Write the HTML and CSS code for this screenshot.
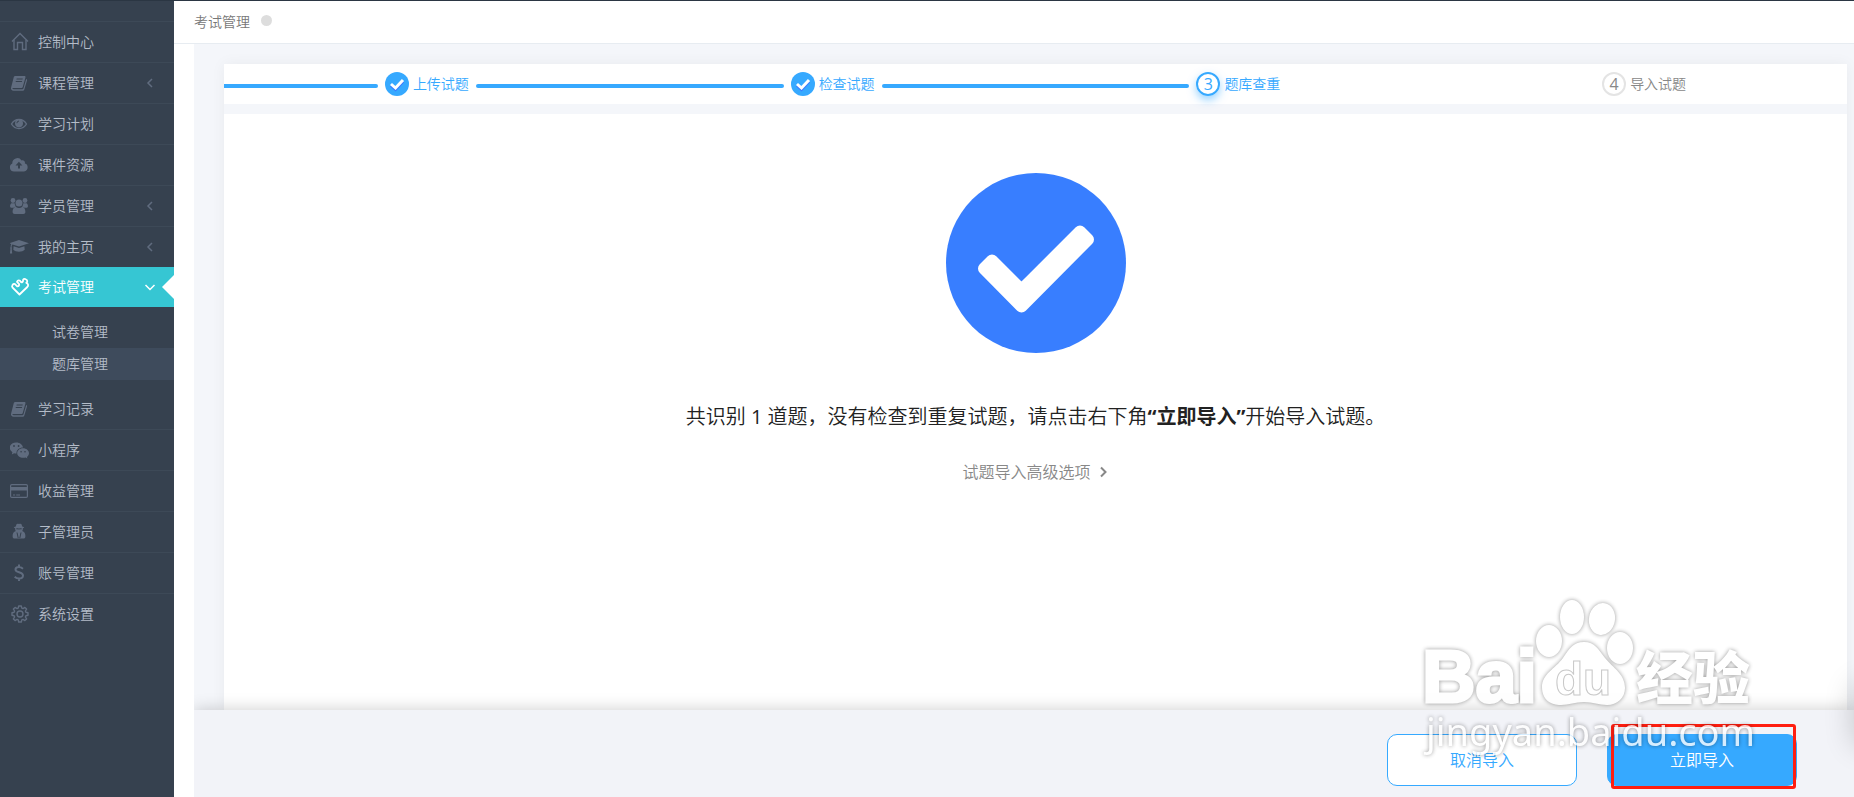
FILE: index.html
```html
<!DOCTYPE html>
<html lang="zh-CN">
<head>
<meta charset="utf-8">
<title>考试管理</title>
<link rel="stylesheet" href="styles.css">
</head>
<body>
<div class="app">
  <nav class="sidebar">
    <ul class="menu">
      <li><a class="item" href="#"><svg class="icon" viewBox="0 0 20 20"><g fill="none" stroke="currentColor" stroke-width="1.4"><path d="M2 9.500 10 1.500 18 9.500"/><path d="M4 8v9.500h3.500v-7h5v7h3.500V8"/></g></svg><span>控制中心</span></a></li>
      <li><a class="item" href="#"><svg class="icon" viewBox="1 0 20 20"><path fill="currentColor" fill-rule="evenodd" d="M6.200 3h9.300c.8 0 1.200.6 1 1.300l-2.700 9.400c-.3 1-.8 1.300-1.600 1.300H4.100c-.7 0-.8.3-.7.6.2.5.8.6 1.400.6h8.500c.6 0 1-.3 1.200-.9L17.200 6c.7.300 1 .8.800 1.500l-2.600 8.700c-.3.900-1 1.600-2 1.600H4.600c-1.800 0-3.100-1.500-2.500-3.200L4.800 4c.2-.6.700-1 1.400-1zm1.500 2.600-.3 1h6.100l.3-1zm-.8 2.500-.3 1h6.200l.3-1z"/></svg><span>课程管理</span><svg class="arrow" viewBox="0 0 12 12"><path d="M8 2 4 6l4 4"/></svg></a></li>
      <li><a class="item" href="#"><svg class="icon" viewBox="1 0 20 20"><g fill="none" stroke="currentColor"><path stroke-width="1.4" d="M2.500 10C6 4 14 4 17.500 10 14 16 6 16 2.500 10z"/></g><circle cx="10" cy="9.300" r="4" fill="currentColor"/><path d="M7.900 9.200A2.200 2.200 0 0 1 10 7" stroke="#36414f" fill="none"/></svg><span>学习计划</span></a></li>
      <li><a class="item" href="#"><svg class="icon" viewBox="1 0 20 20"><path fill="currentColor" fill-rule="evenodd" d="M5 16.500a4.200 4.200 0 0 1-1.700-8A5 5 0 0 1 12.500 5.500c2-.8 3.900.8 3.400 2.900 4 .8 3.600 7.700-.9 8.100zM9.900 6.800 6.500 10.400H9v3.200h2v-3.200h2.400z"/></svg><span>课件资源</span></a></li>
      <li><a class="item" href="#"><svg class="icon" viewBox="1 0 20 20"><g fill="currentColor"><circle cx="4" cy="4.500" r="2.400"/><circle cx="16" cy="4.500" r="2.400"/><circle cx="10" cy="7" r="3.500"/><path d="M2.400 7.200h3.300c.1 1.800.8 2.900 1.600 3.500-1.300 0-2 .3-2.700 1H2.700C.3 11.700.8 8.200 2.400 7.200zM17.600 7.200h-3.300c-.1 1.800-.8 2.900-1.600 3.500 1.300 0 2 .3 2.700 1h1.900c2.400 0 1.900-3.500.3-4.500zM7 11c1.500 1.200 4.500 1.200 6 0 2.700 0 3.400 2.800 3.400 5 0 1.300-.8 2-2 2H5.600c-1.200 0-2-.7-2-2 0-2.200.7-5 3.400-5z"/></g></svg><span>学员管理</span><svg class="arrow" viewBox="0 0 12 12"><path d="M8 2 4 6l4 4"/></svg></a></li>
      <li><a class="item" href="#"><svg class="icon" viewBox="1 0 20 20"><path fill="currentColor" d="M10 3 20 6.300 10 9.600 3.500 7.500c-.7.700-.9 1.600-.9 2.700.5.500.5 1.100.1 1.500l.5 4.800H.9l.6-4.800c-.4-.5-.4-1.100.1-1.500 0-1.300.2-2.400.7-3.200L0 6.300zM4.600 9.300 10 11l5.400-1.700.3 3.500c-2.200 2.600-9.200 2.600-11.400 0z"/></svg><span>我的主页</span><svg class="arrow" viewBox="0 0 12 12"><path d="M8 2 4 6l4 4"/></svg></a></li>
      <li class="open">
        <a class="item active" href="#"><svg class="icon" viewBox="0 0 20 20"><path fill="none" stroke="currentColor" stroke-width="1.8" stroke-linejoin="round" stroke-linecap="round" d="M9.500 17.500 2.600 10.700C1.200 8.800 3 6.300 5 7.100L7.200 9.300C9 9.400 9.600 8 8.900 6.800L7 4.800C7.700 2.900 10 3.100 10.800 4.800c.9.900 2.400.3 2.200-1.100-.1-1.400 1.200-2.300 2.700-1.500C18.300 3.500 17 5.500 16.300 5.900 18.300 6.500 18.700 8.500 17.300 10z"/></svg><span>考试管理</span><svg class="arrow" viewBox="0 0 12 12"><path d="M1.500 4 6 8.500 10.500 4"/></svg></a>
        <ul class="submenu">
          <li><a href="#">试卷管理</a></li>
          <li><a class="current" href="#">题库管理</a></li>
        </ul>
      </li>
      <li><a class="item" href="#"><svg class="icon" viewBox="1 0 20 20"><path fill="currentColor" fill-rule="evenodd" d="M6.200 3h9.300c.8 0 1.200.6 1 1.300l-2.700 9.400c-.3 1-.8 1.300-1.600 1.300H4.100c-.7 0-.8.3-.7.6.2.5.8.6 1.400.6h8.500c.6 0 1-.3 1.200-.9L17.200 6c.7.300 1 .8.800 1.500l-2.600 8.700c-.3.900-1 1.600-2 1.600H4.600c-1.800 0-3.100-1.500-2.500-3.200L4.800 4c.2-.6.700-1 1.400-1zm1.500 2.600-.3 1h6.100l.3-1zm-.8 2.500-.3 1h6.200l.3-1z"/></svg><span>学习记录</span></a></li>
      <li><a class="item" href="#"><svg class="icon" viewBox="1 0 20 20"><g fill="currentColor"><path d="M7.300 2.500c3.600 0 6.300 2.200 6.700 4.900-3.800 0-6.900 2.700-6.500 6.200-.9 0-1.700-.1-2.400-.4l-2.300 1.200.6-2.100C-1.700 8.600.9 2.500 7.300 2.500z"/><path d="M14 8.300c3.300 0 6 2.200 6 4.900 0 1.500-.8 2.700-2.100 3.700l.5 1.600-1.800-1c-4.400 1.300-8.400-1.200-8.400-4.300 0-2.700 2.500-4.900 5.800-4.900z"/></g><g fill="#36414f"><circle cx="5" cy="6" r=".9"/><circle cx="9.600" cy="6" r=".9"/><circle cx="12.100" cy="11.800" r=".8"/><circle cx="16" cy="11.800" r=".8"/></g></svg><span>小程序</span></a></li>
      <li><a class="item" href="#"><svg class="icon" viewBox="1 0 20 20"><rect x="1.600" y="3.600" width="16.800" height="12.800" rx="1.200" fill="none" stroke="currentColor" stroke-width="1.200"/><path fill="currentColor" d="M1.500 6h17v3.500h-17zM4 13.500h2.200v1H4zM7.200 13.500h3.800v1H7.200z"/></svg><span>收益管理</span></a></li>
      <li><a class="item" href="#"><svg class="icon" viewBox="1 0 20 20"><path fill="currentColor" fill-rule="evenodd" d="M6.800 4.500 7.400 2.400c.3-.8 1-.9 2.600-.5 1.600-.4 2.300-.3 2.600.5l.6 2.100c2.600.5 2.600 1.300.6 1.700.2 1.300-.1 2-.6 2.700 2.200.6 3.200 2.500 3.200 5 0 1.800-.6 2.600-2.300 2.600H5.900c-1.700 0-2.300-.8-2.300-2.600 0-2.500 1-4.400 3.200-5-.5-.7-.8-1.400-.6-2.700-2-.4-2-1.200.6-1.700z"/><path d="M7.300 6.800h2l.7.500.7-.5h2M8 10.500l1.200 5.500M12 10.500 10.800 16" fill="none" stroke="#36414f"/></svg><span>子管理员</span></a></li>
      <li><a class="item" href="#"><svg class="icon" viewBox="1 0 20 20"><g fill="none" stroke="currentColor" stroke-width="2"><path d="M14 5.700C12.400 4.400 11 4 9.700 4 7.600 4 6.500 5.100 6.500 6.500c0 3.500 7.500 2 7.500 6 0 1.800-1.600 3-3.900 3-1.600 0-3.200-.6-4.400-1.800M10 1.500V4M10 15.500v2.500"/></g></svg><span>账号管理</span></a></li>
      <li><a class="item" href="#"><svg class="icon" viewBox="0 0 20 20"><g fill="none" stroke="currentColor" stroke-width="1.4" stroke-linejoin="round"><path d="M8.700 2h2.600l.5 2.100 1.200.5 1.900-1.200 1.700 1.700-1.200 1.900.5 1.200 2.100.5v2.600l-2.100.5-.5 1.200 1.200 1.900-1.700 1.700-1.900-1.200-1.200.5-.5 2.100H8.700l-.5-2.100-1.200-.5-1.900 1.200-1.700-1.700 1.200-1.900-.5-1.200L2 11.300V8.700l2.100-.5.500-1.200-1.200-1.900 1.700-1.700L7 4.600l1.200-.5z"/><circle cx="10" cy="10" r="3"/></g></svg><span>系统设置</span></a></li>
    </ul>
  </nav>
  <div class="page">
    <header class="topbar"><span>考试管理</span><i class="dot"></i></header>
    <main class="content">
      <div class="sheet">
        <ol class="steps">
          <li class="step done"><span class="mark"><svg viewBox="0 0 24 24"><path d="M6 13.500 10.500 17.500 18 9.500" stroke="#3b7bff"/><path d="M6 12 10.500 16 18 8" stroke="#fff"/></svg></span><span class="label">上传试题</span></li>
          <li class="step done"><span class="mark"><svg viewBox="0 0 24 24"><path d="M6 13.500 10.500 17.500 18 9.500" stroke="#3b7bff"/><path d="M6 12 10.500 16 18 8" stroke="#fff"/></svg></span><span class="label">检查试题</span></li>
          <li class="step doing"><span class="mark">3</span><span class="label">题库查重</span></li>
          <li class="step"><span class="mark">4</span><span class="label">导入试题</span></li>
        </ol>
        <section class="result">
          <svg class="success" viewBox="0 0 180 180"><circle cx="90" cy="90" r="90" fill="#387eff"/><path fill="#fff" stroke="#fff" stroke-width="12" stroke-linejoin="round" d="M38 95.500 46 87.500 75.500 117 134 58.500 142 66.500 75.500 133.500z"/></svg>
          <p class="message">共识别 <span class="count">1</span> 道题，没有检查到重复试题，请点击右下角<strong>“立即导入”</strong>开始导入试题。</p>
          <a class="advanced" href="#">试题导入高级选项<svg viewBox="0 0 12 12"><path d="M4 1.500 8.500 6 4 10.500"/></svg></a>
        </section>
      </div>
      <footer class="actions">
        <button class="btn" type="button">取消导入</button>
        <button class="btn primary" type="button">立即导入</button>
      </footer>
    </main>
  </div>
  <div class="highlight"></div>
  <div class="drawer"></div>
  <svg class="watermark" viewBox="0 0 350 170" role="img" aria-label="Baidu 经验">
    <g class="wm-shape">
      <ellipse cx="116" cy="50" rx="13" ry="16"/>
      <ellipse cx="139" cy="26" rx="12" ry="17"/>
      <ellipse cx="169" cy="28" rx="13" ry="16" transform="rotate(10 169 28)"/>
      <ellipse cx="187" cy="57" rx="13" ry="16"/>
      <path d="M151 51c-11 0-15 7-21 16-8 11-21 16-21 29 0 13 9 18 19 18 8 0 14-3 23-3s15 3 23 3c10 0 18-7 18-17 0-14-12-20-20-30-7-9-10-16-21-16z"/>
    </g>
    <text class="wm-latin" x="-11" y="111">Bai</text>
    <text class="wm-du" x="122" y="104">du</text>
    <text class="wm-cjk" x="203" y="108">经验</text>
    <text class="wm-url" x="-7" y="155">jingyan.baidu.com</text>
  </svg>
</div>
</body>
</html>
```
FILE: styles.css
```css
* { box-sizing: border-box; }
body {
  margin: 0;
  font: 350 14px/20px "Open Sans", "Noto Sans CJK SC", sans-serif;
  color: #333;
  background: #fff;
}
a { color: inherit; text-decoration: none; }
ul, ol { margin: 0; padding: 0; list-style: none; }

.app {
  position: relative;
  display: flex;
  min-height: 100vh;
  border-top: 1px solid #2b3643;
  overflow: hidden;
}

.sidebar { flex: none; width: 174px; padding-top: 20px; background: #36414f; color: #b4bcc8; }
.item {
  display: flex;
  align-items: center;
  gap: 8px;
  height: 41px;
  padding: 0 18px 0 10px;
  border-top: 1px solid #3d4957;
}
.icon { flex: none; width: 20px; height: 20px; color: #606c7f; }
.arrow {
  width: 12px;
  height: 12px;
  margin-left: auto;
  fill: none;
  stroke: #606c7f;
  stroke-width: 1.5;
}
.item.active {
  position: relative;
  height: 40px;
  border-top: 0;
  background: #36c6d3;
  color: #fff;
}
.active .icon { color: #fff; }
.active .arrow { stroke: #fff; }
.active::after {
  content: "";
  position: absolute;
  right: 0;
  top: 8px;
  border: 12px solid transparent;
  border-left: 0;
  border-right-color: #fff;
}
.submenu { padding: 9px 0 8px; }
.submenu a { display: block; padding: 6px 0 6px 52px; }
.submenu .current { background: #3e4b5c; }
.open + li .item { border-top-color: transparent; }

.page { flex: 1; min-width: 0; display: flex; flex-direction: column; }
.topbar {
  display: flex;
  align-items: center;
  gap: 11px;
  height: 43px;
  padding: 0 20px;
  border-bottom: 1px solid #e7ecf1;
  color: #777;
}
.dot { width: 11px; height: 11px; margin-bottom: 4px; border-radius: 50%; background: #ddd; }

.content { flex: 1; display: flex; flex-direction: column; margin-left: 20px; background: #f4f6fa; }
.sheet {
  flex: 1;
  display: flex;
  flex-direction: column;
  gap: 10px;
  margin: 20px 7px 0 30px;
  box-shadow: 0 0 14px rgba(0, 0, 40, 0.05);
}
.steps { display: grid; grid-template-columns: repeat(4, 1fr); height: 40px; background: #fff; }
.step { display: flex; align-items: center; color: #888; }
.step::before, .step::after { content: ""; flex: 1; height: 4px; margin-top: 4px; }
.step::before { margin-right: 7px; border-radius: 0 2px 2px 0; }
.step::after { margin-left: 7px; border-radius: 2px 0 0 2px; }
.done::before, .done::after, .doing::before { background: #36a9ff; }
.done, .doing { color: #36a9ff; }
.mark {
  width: 24px;
  height: 24px;
  margin-right: 4px;
  border: 2px solid #e4e4e4;
  border-radius: 50%;
  font-weight: 400;
  font-size: 16px;
  text-align: center;
}
.doing .mark { border-color: #36a9ff; box-shadow: 0 4px 8px rgba(54, 169, 255, 0.5); }
.done .mark { border: 0; background: #36a9ff; }
.mark svg { display: block; fill: none; stroke-width: 3; }

.result {
  flex: 1;
  display: flex;
  flex-direction: column;
  align-items: center;
  padding-top: 59px;
  background: #fff;
}
.success { width: 180px; height: 180px; }
.message { margin: 48px 0 0; font-size: 20px; line-height: 32px; text-align: center; color: #222; }
.message strong { font-weight: 700; }
.count { font-weight: 400; }
.advanced {
  display: flex;
  align-items: center;
  gap: 6px;
  margin-top: 27px;
  font-size: 16px;
  line-height: 24px;
  color: #888;
}
.advanced svg { width: 12px; height: 12px; fill: none; stroke: #888; stroke-width: 2; }

.actions {
  position: relative;
  display: flex;
  justify-content: flex-end;
  gap: 30px;
  padding: 24px 57px 11px;
  background: #f2f3f8;
  box-shadow: 0 0 16px rgba(0, 0, 0, 0.2);
  clip-path: inset(-20px 0 0 0);
}
.btn {
  width: 190px;
  height: 52px;
  border: 1px solid #36a9ff;
  border-radius: 10px;
  background: #fff;
  color: #36a9ff;
  font: inherit;
  font-size: 16px;
}
.btn.primary { background: #36a9ff; color: #fff; }

.highlight {
  position: absolute;
  right: 58px;
  bottom: 8px;
  width: 185px;
  height: 65px;
  border: 3px solid #ff1e10;
  border-radius: 3px;
}
.drawer {
  position: absolute;
  right: -60px;
  bottom: 52px;
  width: 60px;
  height: 60px;
  box-shadow: 0 0 30px rgba(0, 0, 0, 0.2);
}
.watermark {
  position: absolute;
  right: 71px;
  bottom: 36px;
  width: 350px;
  height: 170px;
  overflow: visible;
  pointer-events: none;
  opacity: 0.8;
  filter: drop-shadow(0 0 2px rgba(0, 0, 0, 0.5));
}
.wm-shape { fill: #fff; }
.watermark text { fill: #fff; }
.wm-latin { font: bold 74px "Liberation Sans", sans-serif; stroke: #fff; stroke-width: 3; }
.watermark .wm-du { font: bold 46px "Liberation Sans", sans-serif; stroke: #bbb; stroke-width: 1; }
.wm-cjk { font: 900 57px "Noto Sans CJK SC", sans-serif; }
.wm-url { font: 38px "Noto Sans", sans-serif; }
```
